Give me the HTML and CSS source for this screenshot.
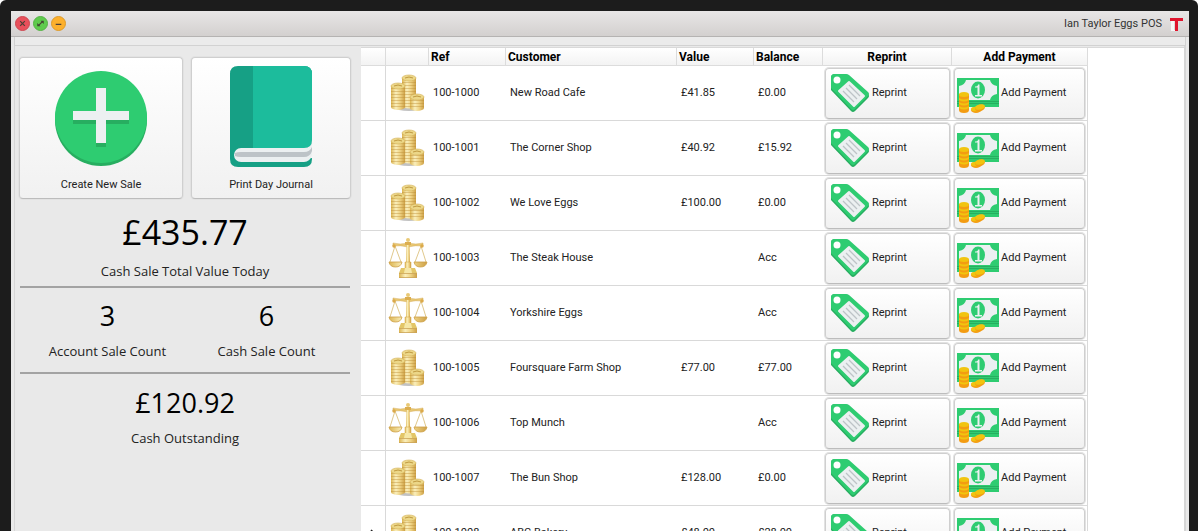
FILE: index.html
```html
<!DOCTYPE html>
<html lang="en">
<head>
<meta charset="utf-8">
<title>Ian Taylor Eggs POS</title>
<link rel="stylesheet" href="styles.css">
</head>
<body>
<svg class="defs" aria-hidden="true">
  <defs>
    <linearGradient id="gold"><stop offset="0" stop-color="#dcb450"/><stop offset=".35" stop-color="#faefbc"/><stop offset=".65" stop-color="#efd384"/><stop offset="1" stop-color="#cda046"/></linearGradient>
    <pattern id="rims" width="40" height="3" patternUnits="userSpaceOnUse"><path d="M0 2.5h40" stroke="#b98a32" stroke-width=".8" opacity=".5"/></pattern>
    <symbol id="coins" viewBox="0 0 36 38">
      <ellipse cx="19" cy="34" rx="14" ry="3" fill="#777" opacity=".45"/>
      <path d="M12 4v28a7 2.500 0 0 0 14 0V4z" fill="url(#gold)"/><path d="M12 5h14v28H12z" fill="url(#rims)"/>
      <ellipse cx="19" cy="4" rx="7" ry="3" fill="#ecd788" stroke="#d4b058" stroke-width=".6"/><path d="M15 4q4-2 8 0" stroke="#c09a42" fill="none"/>
      <path d="M1 12v21a7 3 0 0 0 14 0V12z" fill="url(#gold)"/><path d="M1 13h14v21H1z" fill="url(#rims)"/>
      <ellipse cx="8" cy="12" rx="7" ry="3" fill="#ecd788" stroke="#d4b058" stroke-width=".6"/><path d="M4 12q4-2 8 0" stroke="#c09a42" fill="none"/>
      <path d="M20 23v11a7 3 0 0 0 14 0V23z" fill="url(#gold)"/><path d="M20 24h14v11H20z" fill="url(#rims)"/>
      <ellipse cx="27" cy="23" rx="7" ry="3" fill="#ecd788" stroke="#d4b058" stroke-width=".6"/><path d="M23 23q4-2 8 0" stroke="#c09a42" fill="none"/>
    </symbol>
    <symbol id="scales" viewBox="0 0 40 42">
      <path d="M7 9 2 25M7 9l6 16M33 9l-6 16M33 9l5 16" stroke="#e0c88c" stroke-width="1" fill="none"/>
      <path d="M5 6q7 2 15 0 8 2 15 0v3q-7-1-15 1-8-2-15-1z" fill="#e8c772" stroke="#d2a852" stroke-width=".5"/>
      <circle cx="6" cy="9" r="1.700" fill="#dba94a"/><circle cx="34" cy="9" r="1.700" fill="#dba94a"/>
      <circle cx="20" cy="3" r="2" fill="#e9c975"/><path d="M17 5h6v3h-6z" fill="#dcae4f"/>
      <path d="M18.500 8h3l.5 18h-4z" fill="url(#gold)"/>
      <path d="M1 25h13q-1 5-6.500 5T1 25zM26 25h13q-1 5-6.500 5T26 25z" fill="url(#gold)" stroke="#cda046" stroke-width=".8"/>
      <path d="M17 25h6v7h-6z" fill="url(#gold)" stroke="#d2a344" stroke-width=".5"/>
      <path d="M13 31h14l2 5H11z" fill="#e3c668"/><path d="M17 31h6l1 5h-8z" fill="#f6e8a8"/>
      <path d="M11 36h18v5H11z" fill="url(#gold)"/><path d="M11 36.500h18M11 40.500h18" stroke="#cba458" stroke-width=".8"/>
    </symbol>
    <symbol id="tag" viewBox="0 0 40 40">
      <path d="M1 5v12l20 21q2 2 4 0l13-13q2-2 0-4L19 3q-2-2-4-2H5Q1 1 1 5z" fill="#27ae60"/>
      <path d="M1 4v11l20 21q2 2 4 0l13-13q2-2 0-4L19 2q-1-1-4-1H5Q1 1 1 4z" fill="#2ecc71"/>
      <circle cx="7" cy="7" r="3.500" fill="#fff"/>
      <path d="M19 9 34 23 24 33 9 18z" fill="#ecf0f1" stroke="#ecf0f1" stroke-width="2" stroke-linejoin="round"/>
      <path d="m19 12 11 11m-14-8 11 11m-14-8 11 11" stroke="#bdc3c7" stroke-width="1.300"/>
    </symbol>
    <symbol id="money" viewBox="0 0 42 36">
      <path d="M0 1h42v29H0z" fill="#27ae60"/><path d="M0 25h42v1H0zM0 27h42v3H0z" fill="#2ecc71"/>
      <path d="M0 1h42v23H0z" fill="#2ecc71"/>
      <path d="M9 3h24q1 5 7 6v8q-6 1-7 6H9q-1-5-7-6V9q6-1 7-6z" fill="#ecf0f1"/>
      <ellipse cx="21" cy="13" rx="7" ry="8.500" fill="#2ecc71"/>
      <path d="M18 9.500q3 0 3-2h1.500V18H25v1.500h-7V18h2.500v-7.500H18z" fill="#ecf0f1"/>
      <path d="M2 17v16q0 3 5 3t5-3V17z" fill="#f39c12"/>
      <g fill="#f1c40f"><ellipse cx="7" cy="17.500" rx="5" ry="2.500"/><path d="M2 21q5 3 10 0v2q-5 3-10 0zM2 25q5 3 10 0v2q-5 3-10 0zM2 29q5 3 10 0v2q-5 3-10 0z"/></g>
      <ellipse cx="19" cy="33" rx="5" ry="3" fill="#f39c12"/><ellipse cx="19" cy="32" rx="5" ry="2.300" fill="#f1c40f"/>
      <ellipse cx="23" cy="31" rx="5" ry="3.300" fill="#f39c12" transform="rotate(-15 23 31)"/><ellipse cx="23" cy="30" rx="5" ry="2.500" fill="#f1c40f" transform="rotate(-15 23 30)"/>
    </symbol>
  </defs>
</svg>

<div class="window">
  <header class="titlebar">
    <div class="controls">
      <button class="control close" aria-label="Close"><svg viewBox="0 0 14 14"><path d="m4.500 4.500 5 5m0-5-5 5"/></svg></button>
      <button class="control expand" aria-label="Maximise"><svg viewBox="0 0 14 14"><path d="M7 4h3.500v3.500zM3.500 6.500V10H7z" class="solid"/><path d="m5 9 4-4"/></svg></button>
      <button class="control minimise" aria-label="Minimise"><svg viewBox="0 0 14 14"><path d="M4 8h6"/></svg></button>
    </div>
    <h1 class="title">Ian Taylor Eggs POS</h1>
    <svg class="logo" viewBox="0 0 14 14" aria-hidden="true"><path d="M1 3h3v10h3v1H1z" fill="#f7f7f7"/><path d="M0 1h13v3H8v10H5V4H0z" fill="#e0142d"/></svg>
  </header>
  <div class="toolbar"></div>
  <main class="content">
    <aside class="sidebar">
      <div class="actions">
        <button class="tile">
          <svg class="tile-icon" viewBox="0 0 100 104" aria-hidden="true"><circle cx="50" cy="54" r="46" fill="#27ae60"/><circle cx="50" cy="51" r="46" fill="#2ecc71"/><path d="M22 49h23v23h10V49h23v9H55v23H45V58H22z" fill="#27ae60"/><path d="M45 22h10v23h23v9H55v23H45V54H22v-9h23z" fill="#ecf0f1"/></svg>
          <span>Create New Sale</span>
        </button>
        <button class="tile">
          <svg class="tile-icon" viewBox="0 0 100 104" aria-hidden="true"><path d="M17 0h66q8 0 8 8v72q0 8-8 8v5l8-1v1q0 8-8 8H17q-8 0-8-8V8q0-8 8-8z" fill="#16a085"/><path d="M32 0h51q8 0 8 8v66q0 8-8 8H32z" fill="#1cbc9c"/><path d="M20 82h63q8 0 8-8v15q-2 7-8 7H20a7 7 0 0 1 0-14z" fill="#ecf0f1"/><path d="M14 87q2-1 6-1h63q6 0 8-5v4q-2 6-8 6H20q-4 0-6-1z" fill="#bdc3c7"/></svg>
          <span>Print Day Journal</span>
        </button>
      </div>
      <section class="stat stat-main"><p class="figure">£435.77</p><p class="caption">Cash Sale Total Value Today</p></section>
      <section class="counts">
        <div class="stat"><p class="figure">3</p><p class="caption">Account Sale Count</p></div>
        <div class="stat"><p class="figure">6</p><p class="caption">Cash Sale Count</p></div>
      </section>
      <section class="stat"><p class="figure">£120.92</p><p class="caption">Cash Outstanding</p></section>
    </aside>
    <div class="grid-panel">
      <table class="sales">
        <colgroup><col class="c-mark"><col class="c-type"><col class="c-ref"><col class="c-customer"><col class="c-value"><col class="c-balance"><col class="c-reprint"><col class="c-payment"></colgroup>
        <thead><tr><th></th><th></th><th>Ref</th><th>Customer</th><th>Value</th><th>Balance</th><th class="mid">Reprint</th><th class="mid">Add Payment</th></tr></thead>
        <tbody>
          <tr><td></td><td class="type"><svg class="coins"><use href="#coins"/></svg></td><td>100-1000</td><td>New Road Cafe</td><td>£41.85</td><td>£0.00</td><td class="act"><button><svg class="tag"><use href="#tag"/></svg>Reprint</button></td><td class="act"><button><svg class="money"><use href="#money"/></svg>Add Payment</button></td></tr>
          <tr><td></td><td class="type"><svg class="coins"><use href="#coins"/></svg></td><td>100-1001</td><td>The Corner Shop</td><td>£40.92</td><td>£15.92</td><td class="act"><button><svg class="tag"><use href="#tag"/></svg>Reprint</button></td><td class="act"><button><svg class="money"><use href="#money"/></svg>Add Payment</button></td></tr>
          <tr><td></td><td class="type"><svg class="coins"><use href="#coins"/></svg></td><td>100-1002</td><td>We Love Eggs</td><td>£100.00</td><td>£0.00</td><td class="act"><button><svg class="tag"><use href="#tag"/></svg>Reprint</button></td><td class="act"><button><svg class="money"><use href="#money"/></svg>Add Payment</button></td></tr>
          <tr><td></td><td class="type"><svg class="scales"><use href="#scales"/></svg></td><td>100-1003</td><td>The Steak House</td><td></td><td>Acc</td><td class="act"><button><svg class="tag"><use href="#tag"/></svg>Reprint</button></td><td class="act"><button><svg class="money"><use href="#money"/></svg>Add Payment</button></td></tr>
          <tr><td></td><td class="type"><svg class="scales"><use href="#scales"/></svg></td><td>100-1004</td><td>Yorkshire Eggs</td><td></td><td>Acc</td><td class="act"><button><svg class="tag"><use href="#tag"/></svg>Reprint</button></td><td class="act"><button><svg class="money"><use href="#money"/></svg>Add Payment</button></td></tr>
          <tr><td></td><td class="type"><svg class="coins"><use href="#coins"/></svg></td><td>100-1005</td><td>Foursquare Farm Shop</td><td>£77.00</td><td>£77.00</td><td class="act"><button><svg class="tag"><use href="#tag"/></svg>Reprint</button></td><td class="act"><button><svg class="money"><use href="#money"/></svg>Add Payment</button></td></tr>
          <tr><td></td><td class="type"><svg class="scales"><use href="#scales"/></svg></td><td>100-1006</td><td>Top Munch</td><td></td><td>Acc</td><td class="act"><button><svg class="tag"><use href="#tag"/></svg>Reprint</button></td><td class="act"><button><svg class="money"><use href="#money"/></svg>Add Payment</button></td></tr>
          <tr><td></td><td class="type"><svg class="coins"><use href="#coins"/></svg></td><td>100-1007</td><td>The Bun Shop</td><td>£128.00</td><td>£0.00</td><td class="act"><button><svg class="tag"><use href="#tag"/></svg>Reprint</button></td><td class="act"><button><svg class="money"><use href="#money"/></svg>Add Payment</button></td></tr>
          <tr><td class="mark"><svg viewBox="0 0 6 8"><path d="m1 1 3 3-3 3"/></svg></td><td class="type"><svg class="coins"><use href="#coins"/></svg></td><td>100-1008</td><td>ABC Bakery</td><td>£48.00</td><td>£28.00</td><td class="act"><button><svg class="tag"><use href="#tag"/></svg>Reprint</button></td><td class="act"><button><svg class="money"><use href="#money"/></svg>Add Payment</button></td></tr>
        </tbody>
      </table>
    </div>
  </main>
</div>
</body>
</html>
```

FILE: styles.css
```css
* { box-sizing: border-box; }
body {
  margin: 0;
  height: 100vh;
  overflow: hidden;
  padding: 11px 9px 0 11px;
  background: #1c1c1c;
  font: 11px/16px Roboto, "Liberation Sans", sans-serif;
  color: #222;
  border-top-left-radius: 6px;
  border-top-right-radius: 6px;
}
html { background: #fff; }
p, h1 { margin: 0; font-weight: 400; }
button { font: inherit; color: inherit; padding: 0; }
.defs { position: absolute; width: 0; height: 0; }

.window { background: #e9e9e9; height: 100%; display: flex; flex-direction: column; overflow: hidden; }
.titlebar {
  flex: none;
  display: flex;
  align-items: center;
  height: 26px;
  padding: 0 5px 0 4px;
  background: linear-gradient(#e8e6e6, #d3d0cf);
  border-bottom: 1px solid #b5b3b2;
}
.controls { display: flex; gap: 3px; margin-right: auto; }
.control { width: 15px; height: 15px; border-radius: 50%; border: 1px solid; display: flex; }
.control svg { width: 13px; height: 13px; fill: none; stroke: #4d4036; stroke-width: 1.3; }
.control .solid { fill: #3c4a30; stroke: none; }
.close { background: #e8505b; border-color: #cf4650; }
.expand { background: #5fcb4d; border-color: #55b345; }
.minimise { background: #fdb02c; border-color: #dd9b2b; }
.title { font-size: 11px; color: #333; }
.logo { width: 14px; height: 14px; margin-left: 8px; }
.toolbar { flex: none; height: 9px; margin: 0 3px; border: 1px solid #d2d2d2; border-top: 0; background: #ebebeb; }

.content { flex: 1; min-height: 0; display: flex; margin: 0 3px; border: 1px solid #d6d6d6; border-width: 0 2px 0 1px; }
.sidebar { flex: none; width: 346px; padding: 11px 10px 0 4px; text-align: center; }
.actions { display: grid; grid-template-columns: 164fr 160fr; gap: 8px; }
.tile, .act button {
  border: 1px solid #cfcfcf;
  border-bottom-color: #bcbcbc;
  border-radius: 4px;
  background: linear-gradient(#fff, #f1f1f1);
  box-shadow: 0 0 0 1px #e2e2e2;
}
.tile { height: 142px; padding-top: 8px; display: flex; flex-direction: column; align-items: center; gap: 7px; }
.tile-icon { width: 100px; height: 104px; }

.stat { font-family: "Open Sans", "Noto Sans", sans-serif; }
.figure { font-size: 27px; line-height: 40px; color: #000; }
.caption { font-size: 13px; line-height: 20px; margin-top: 5px; }
.stat-main { padding: 8px 0 5px; }
.stat-main .figure { font-size: 34px; line-height: 50px; }
.stat-main .caption { margin-top: 4px; }
.counts {
  display: grid;
  grid-template-columns: 1fr 1fr;
  padding: 8px 4px 11px 8px;
  margin: 0 1px 9px;
  border: 2px solid #a3a3a3;
  border-width: 2px 0;
}

.grid-panel { flex: 1; min-width: 0; margin-top: 1px; background: #fff; border-top: 1px solid #d9d9d9; }
.sales { table-layout: fixed; width: 727px; border-collapse: separate; border-spacing: 0; }
.c-mark { width: 25px; }
.c-type { width: 43px; }
.c-ref, .c-value { width: 77px; }
.c-customer { width: 171px; }
.c-balance { width: 69px; }
.c-reprint { width: 129px; }
.c-payment { width: 136px; }
.sales th {
  height: 18px;
  padding: 0 2px;
  text-align: left;
  font-size: 12px;
  line-height: 16px;
  color: #000;
  background: linear-gradient(#fff, #f3f3f3);
  border: 1px solid #dcdcdc;
  border-width: 0 1px 1px 0;
}
.sales .mid { text-align: center; }
.sales td { height: 55px; padding: 0 4px; border-bottom: 1px solid #d9d9d9; white-space: nowrap; }
.sales td:first-child { border-right: 1px solid #d9d9d9; }
.sales td:last-child { border-right: 1px solid #d9d9d9; }
.sales .type { padding: 0 2px; }
.type svg { display: block; }
.coins { width: 36px; height: 38px; margin-left: 2px; }
.scales { width: 40px; height: 42px; }
.mark svg { display: block; width: 6px; height: 8px; margin: 0 auto; fill: none; stroke: #222; stroke-width: 1.5; }
.sales .act { padding: 0 2px; }
.act button { width: 100%; height: 51px; padding-left: 4px; display: flex; align-items: center; gap: 2px; }
.act + .act button { padding-left: 2px; }
.tag { width: 40px; height: 40px; }
.money { width: 42px; height: 36px; margin-top: 4px; }
```
